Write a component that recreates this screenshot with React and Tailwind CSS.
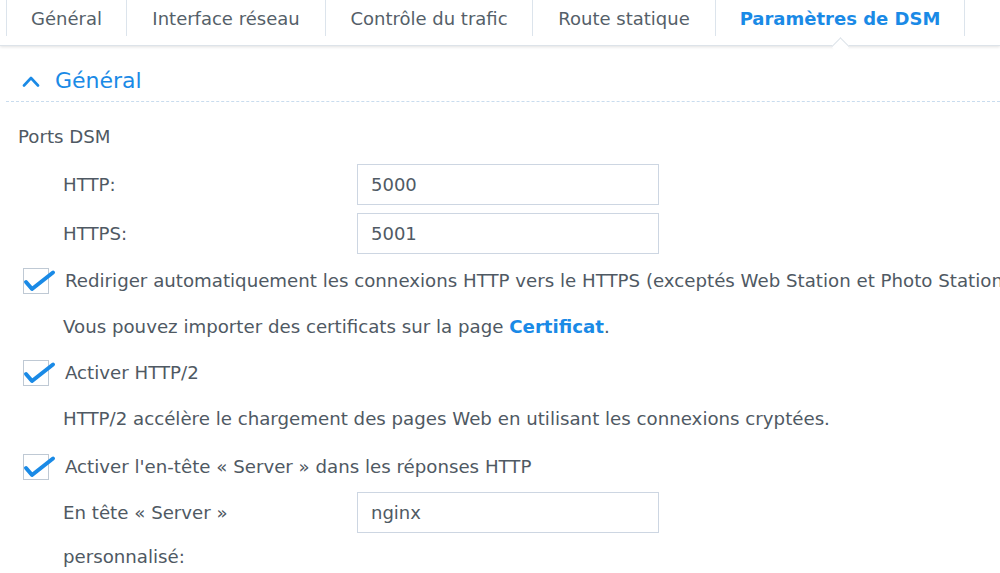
import React from 'react';

const tabs = [
  { label: 'Général', w: 'w-[121px]' },
  { label: 'Interface réseau', w: 'w-[199px]' },
  { label: 'Contrôle du trafic', w: 'w-[207px]' },
  { label: 'Route statique', w: 'w-[183px]' },
  { label: 'Paramètres de DSM', w: 'w-[249px]', active: true },
];

function Checkbox() {
  return (
    <div className="relative w-[26px] h-[26px] border border-[#bfc9d4] bg-white shrink-0">
      <svg className="absolute -left-px -top-px overflow-visible" width="34" height="26" viewBox="0 0 34 26">
        <polyline
          points="3,14 9,21 30,4.5"
          fill="none"
          stroke="#1a8ae6"
          strokeWidth="4"
          strokeLinecap="round"
          strokeLinejoin="round"
        />
      </svg>
    </div>
  );
}

function PortInput({ value }) {
  return (
    <div className="w-[302px] h-[41px] border border-[#cdd6e2] bg-white flex items-center pl-[13px] text-[18px] text-[#505a64]">
      {value}
    </div>
  );
}

export default function App() {
  return (
    <div
      className="w-[1000px] h-[573px] overflow-hidden bg-white text-[18.2px] text-[#4f5963]"
      style={{ fontFamily: '"DejaVu Sans", Verdana, sans-serif' }}
    >
      {/* tab bar */}
      <div className="relative h-[46px] border-b border-[#dde3e9] shadow-[0_1px_3px_rgba(0,0,0,0.12)] flex pl-[6px] text-[18px]">
        {tabs.map((t, i) => (
          <div
            key={t.label}
            className={`relative ${t.w} h-[36px] flex items-center justify-center border-r border-[#dce4ec] ${i === 0 ? 'border-l' : ''} ${
              t.active ? 'text-[#1a8ae6] font-bold' : 'text-[#555f69]'
            }`}
          >
            <span className="whitespace-nowrap">{t.label}</span>
            {t.active && (
              <div className="absolute left-1/2 top-[40px] w-[13px] h-[13px] -ml-[6px] rotate-45 bg-white border-l border-t border-[#dde3e9] z-10" />
            )}
          </div>
        ))}
      </div>

      {/* section header */}
      <div className="ml-[6px] h-[56px] pt-[14px] border-b border-dashed border-[#c9dcee] flex items-center">
        <svg className="ml-[16px]" width="18" height="12" viewBox="0 0 18 12">
          <polyline points="2,10.5 9,3 16,10.5" fill="none" stroke="#1a8ae6" strokeWidth="2.6" strokeLinecap="round" strokeLinejoin="round" />
        </svg>
        <span className="ml-[15px] text-[22px] text-[#1a8ae6]">Général</span>
      </div>

      {/* ports */}
      <div className="mt-[12px] h-[46px] flex items-center pl-[18px]">Ports DSM</div>

      <div className="h-[49px] flex items-center pl-[63px]">
        <span className="w-[294px]">HTTP:</span>
        <PortInput value="5000" />
      </div>
      <div className="h-[49px] flex items-center pl-[63px]">
        <span className="w-[294px]">HTTPS:</span>
        <PortInput value="5001" />
      </div>

      <div className="h-[45px] flex items-center pl-[23px] gap-[16px]">
        <Checkbox />
        <span className="whitespace-nowrap">
          Rediriger automatiquement les connexions HTTP vers le HTTPS (exceptés Web Station et Photo Station)
        </span>
      </div>
      <div className="h-[47px] flex items-center pl-[63px] whitespace-nowrap">
        Vous pouvez importer des certificats sur la page&nbsp;
        <span className="font-bold text-[#1a8ae6]">Certificat</span>.
      </div>

      <div className="h-[46px] flex items-center pl-[23px] gap-[16px]">
        <Checkbox />
        <span>Activer HTTP/2</span>
      </div>
      <div className="h-[46px] flex items-center pl-[63px] whitespace-nowrap">
        HTTP/2 accélère le chargement des pages Web en utilisant les connexions cryptées.
      </div>

      <div className="h-[49px] flex items-center pl-[23px] gap-[16px]">
        <Checkbox />
        <span className="whitespace-nowrap">Activer l'en-tête « Server » dans les réponses HTTP</span>
      </div>
      <div className="flex items-start pl-[63px]">
        <span className="w-[230px] mr-[64px] leading-[44px]">En tête « Server » personnalisé:</span>
        <div className="mt-[1px]">
          <PortInput value="nginx" />
        </div>
      </div>
    </div>
  );
}
